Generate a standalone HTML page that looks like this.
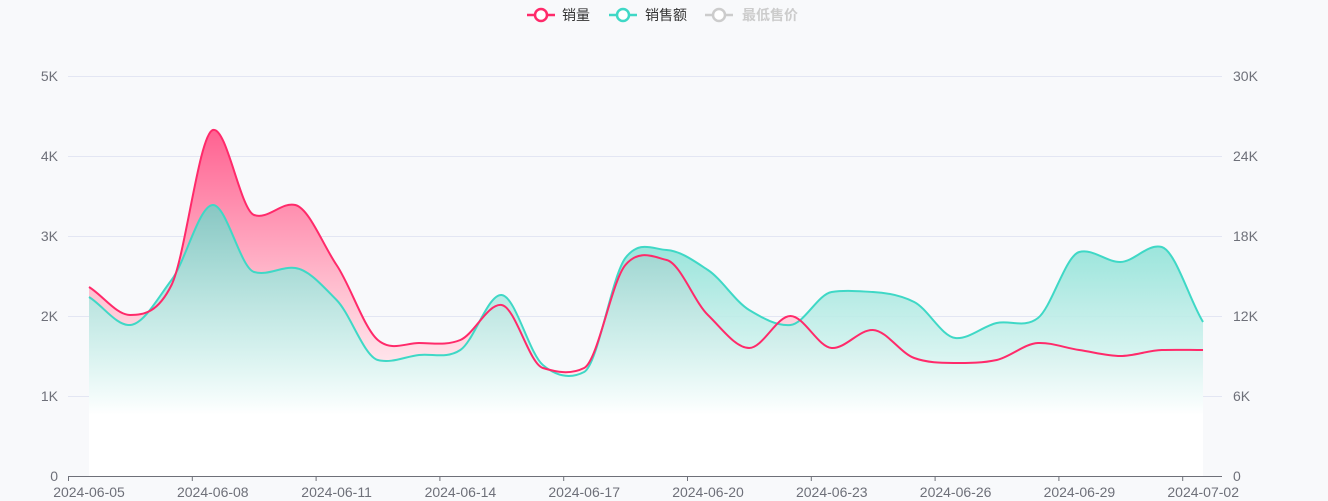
<!DOCTYPE html><html><head><meta charset="utf-8"><style>
body{margin:0;width:1328px;height:501px;background:#f8f9fb;overflow:hidden;font-family:"Liberation Sans","Noto Sans CJK SC",sans-serif}
svg{position:absolute;left:0;top:0}
</style></head><body>
<svg width="1328" height="501" xmlns="http://www.w3.org/2000/svg">
<defs>
<linearGradient id="gp" x1="0" y1="120" x2="0" y2="415" gradientUnits="userSpaceOnUse">
<stop offset="0" stop-color="#ff5c8d"/><stop offset="0.6" stop-color="#ffc4d3"/><stop offset="1" stop-color="#ffffff"/></linearGradient>
<linearGradient id="gt" x1="0" y1="200" x2="0" y2="415" gradientUnits="userSpaceOnUse">
<stop offset="0" stop-color="#5fd8c8" stop-opacity="0.75"/><stop offset="0.5" stop-color="#b4ebe4" stop-opacity="0.85"/><stop offset="1" stop-color="#ffffff" stop-opacity="1"/></linearGradient>
</defs>
<g stroke="#e3e6f3" stroke-width="1">
<line x1="68" y1="76.5" x2="1222" y2="76.5"/><line x1="68" y1="156.5" x2="1222" y2="156.5"/><line x1="68" y1="236.5" x2="1222" y2="236.5"/><line x1="68" y1="316.5" x2="1222" y2="316.5"/><line x1="68" y1="396.5" x2="1222" y2="396.5"/>
</g>
<path id="pa" fill="url(#gp)"/>
<path id="ta" fill="url(#gt)"/>
<rect x="89" y="414" width="1114" height="62" fill="#fff"/>
<path id="tl" fill="none" stroke="#3fd8c6" stroke-width="2"/>
<path id="pl" fill="none" stroke="#ff2a6a" stroke-width="2"/>
<g stroke="#6e7079"><line x1="68" y1="476.5" x2="1222" y2="476.5"/></g>
<g id="ticks" stroke="#6e7079"></g>
<g fill="#6e7079" font-size="14" text-anchor="end">
<text x="58" y="81">5K</text><text x="58" y="161">4K</text><text x="58" y="241">3K</text><text x="58" y="321">2K</text><text x="58" y="401">1K</text><text x="58" y="481">0</text>
</g>
<g fill="#6e7079" font-size="14" text-anchor="start">
<text x="1233" y="81">30K</text><text x="1233" y="161">24K</text><text x="1233" y="241">18K</text><text x="1233" y="321">12K</text><text x="1233" y="401">6K</text><text x="1233" y="481">0</text>
</g>
<g id="xl" fill="#6e7079" font-size="14" text-anchor="middle"></g>
<g font-size="14">
<line x1="527" y1="15" x2="555" y2="15" stroke="#ff2a6a" stroke-width="2.5"/><circle cx="541" cy="15" r="6" fill="#fff" stroke="#ff2a6a" stroke-width="2.5"/>
<text x="562" y="20" fill="#333">销量</text>
<line x1="609" y1="15" x2="637" y2="15" stroke="#3fd8c6" stroke-width="2.5"/><circle cx="623" cy="15" r="6" fill="#fff" stroke="#3fd8c6" stroke-width="2.5"/>
<text x="645" y="20" fill="#333">销售额</text>
<line x1="705" y1="15" x2="733" y2="15" stroke="#ccc" stroke-width="2.5"/><circle cx="719" cy="15" r="6" fill="#fff" stroke="#ccc" stroke-width="2.5"/>
<text x="742" y="20" fill="#ccc" font-weight="bold">最低售价</text>
</g>
</svg>
<script>
var P=[287,315,285,130,215,205,265,340,343,340,305,368,368,265,260,315,348,316,348,330,358,363,360,343,350,356,350,350];
var T=[297,325,280,205,272,268,300,360,355,350,295,365,372,258,250,270,310,325,292,292,302,338,323,318,252,262,247,322];
function pts(a){return a.map(function(y,i){return [89+41.26*i,y]})}
function smooth(p){var n=p.length,h=41.26,d=[],m=[];
for(var i=0;i<n-1;i++)d.push((p[i+1][1]-p[i][1])/h);
for(i=0;i<n;i++){var c;if(i==0)c=d[0];else if(i==n-1)c=d[n-2];else c=(d[i-1]+d[i])/2;
var mo=(i==0||i==n-1)?c:(d[i-1]*d[i]<=0?0:c);m.push(0.5*mo+0.5*c*0.8);}
var s="M"+p[0][0]+","+p[0][1];
for(i=0;i<n-1;i++){var k=h/3;s+=" C"+(p[i][0]+k)+","+(p[i][1]+m[i]*k)+" "+(p[i+1][0]-k)+","+(p[i+1][1]-m[i+1]*k)+" "+p[i+1][0]+","+p[i+1][1];}
return s}
var dp=smooth(pts(P)),dt=smooth(pts(T));
document.getElementById('pl').setAttribute('d',dp);document.getElementById('tl').setAttribute('d',dt);
document.getElementById('pa').setAttribute('d',dp+" L1203,476 L89,476Z");document.getElementById('ta').setAttribute('d',dt+" L1203,476 L89,476Z");
var lb=["2024-06-05","2024-06-08","2024-06-11","2024-06-14","2024-06-17","2024-06-20","2024-06-23","2024-06-26","2024-06-29","2024-07-02"];
var tk=document.getElementById('ticks'),xl=document.getElementById('xl'),ns="http://www.w3.org/2000/svg";
for(var k=0;k<10;k++){var x=68.5+123.8*k;var l=document.createElementNS(ns,'line');l.setAttribute('x1',x);l.setAttribute('x2',x);l.setAttribute('y1',476);l.setAttribute('y2',481);tk.appendChild(l);
var t=document.createElementNS(ns,'text');t.setAttribute('x',89+123.8*k);t.setAttribute('y',497);t.textContent=lb[k];xl.appendChild(t);}
</script>
</body></html>
